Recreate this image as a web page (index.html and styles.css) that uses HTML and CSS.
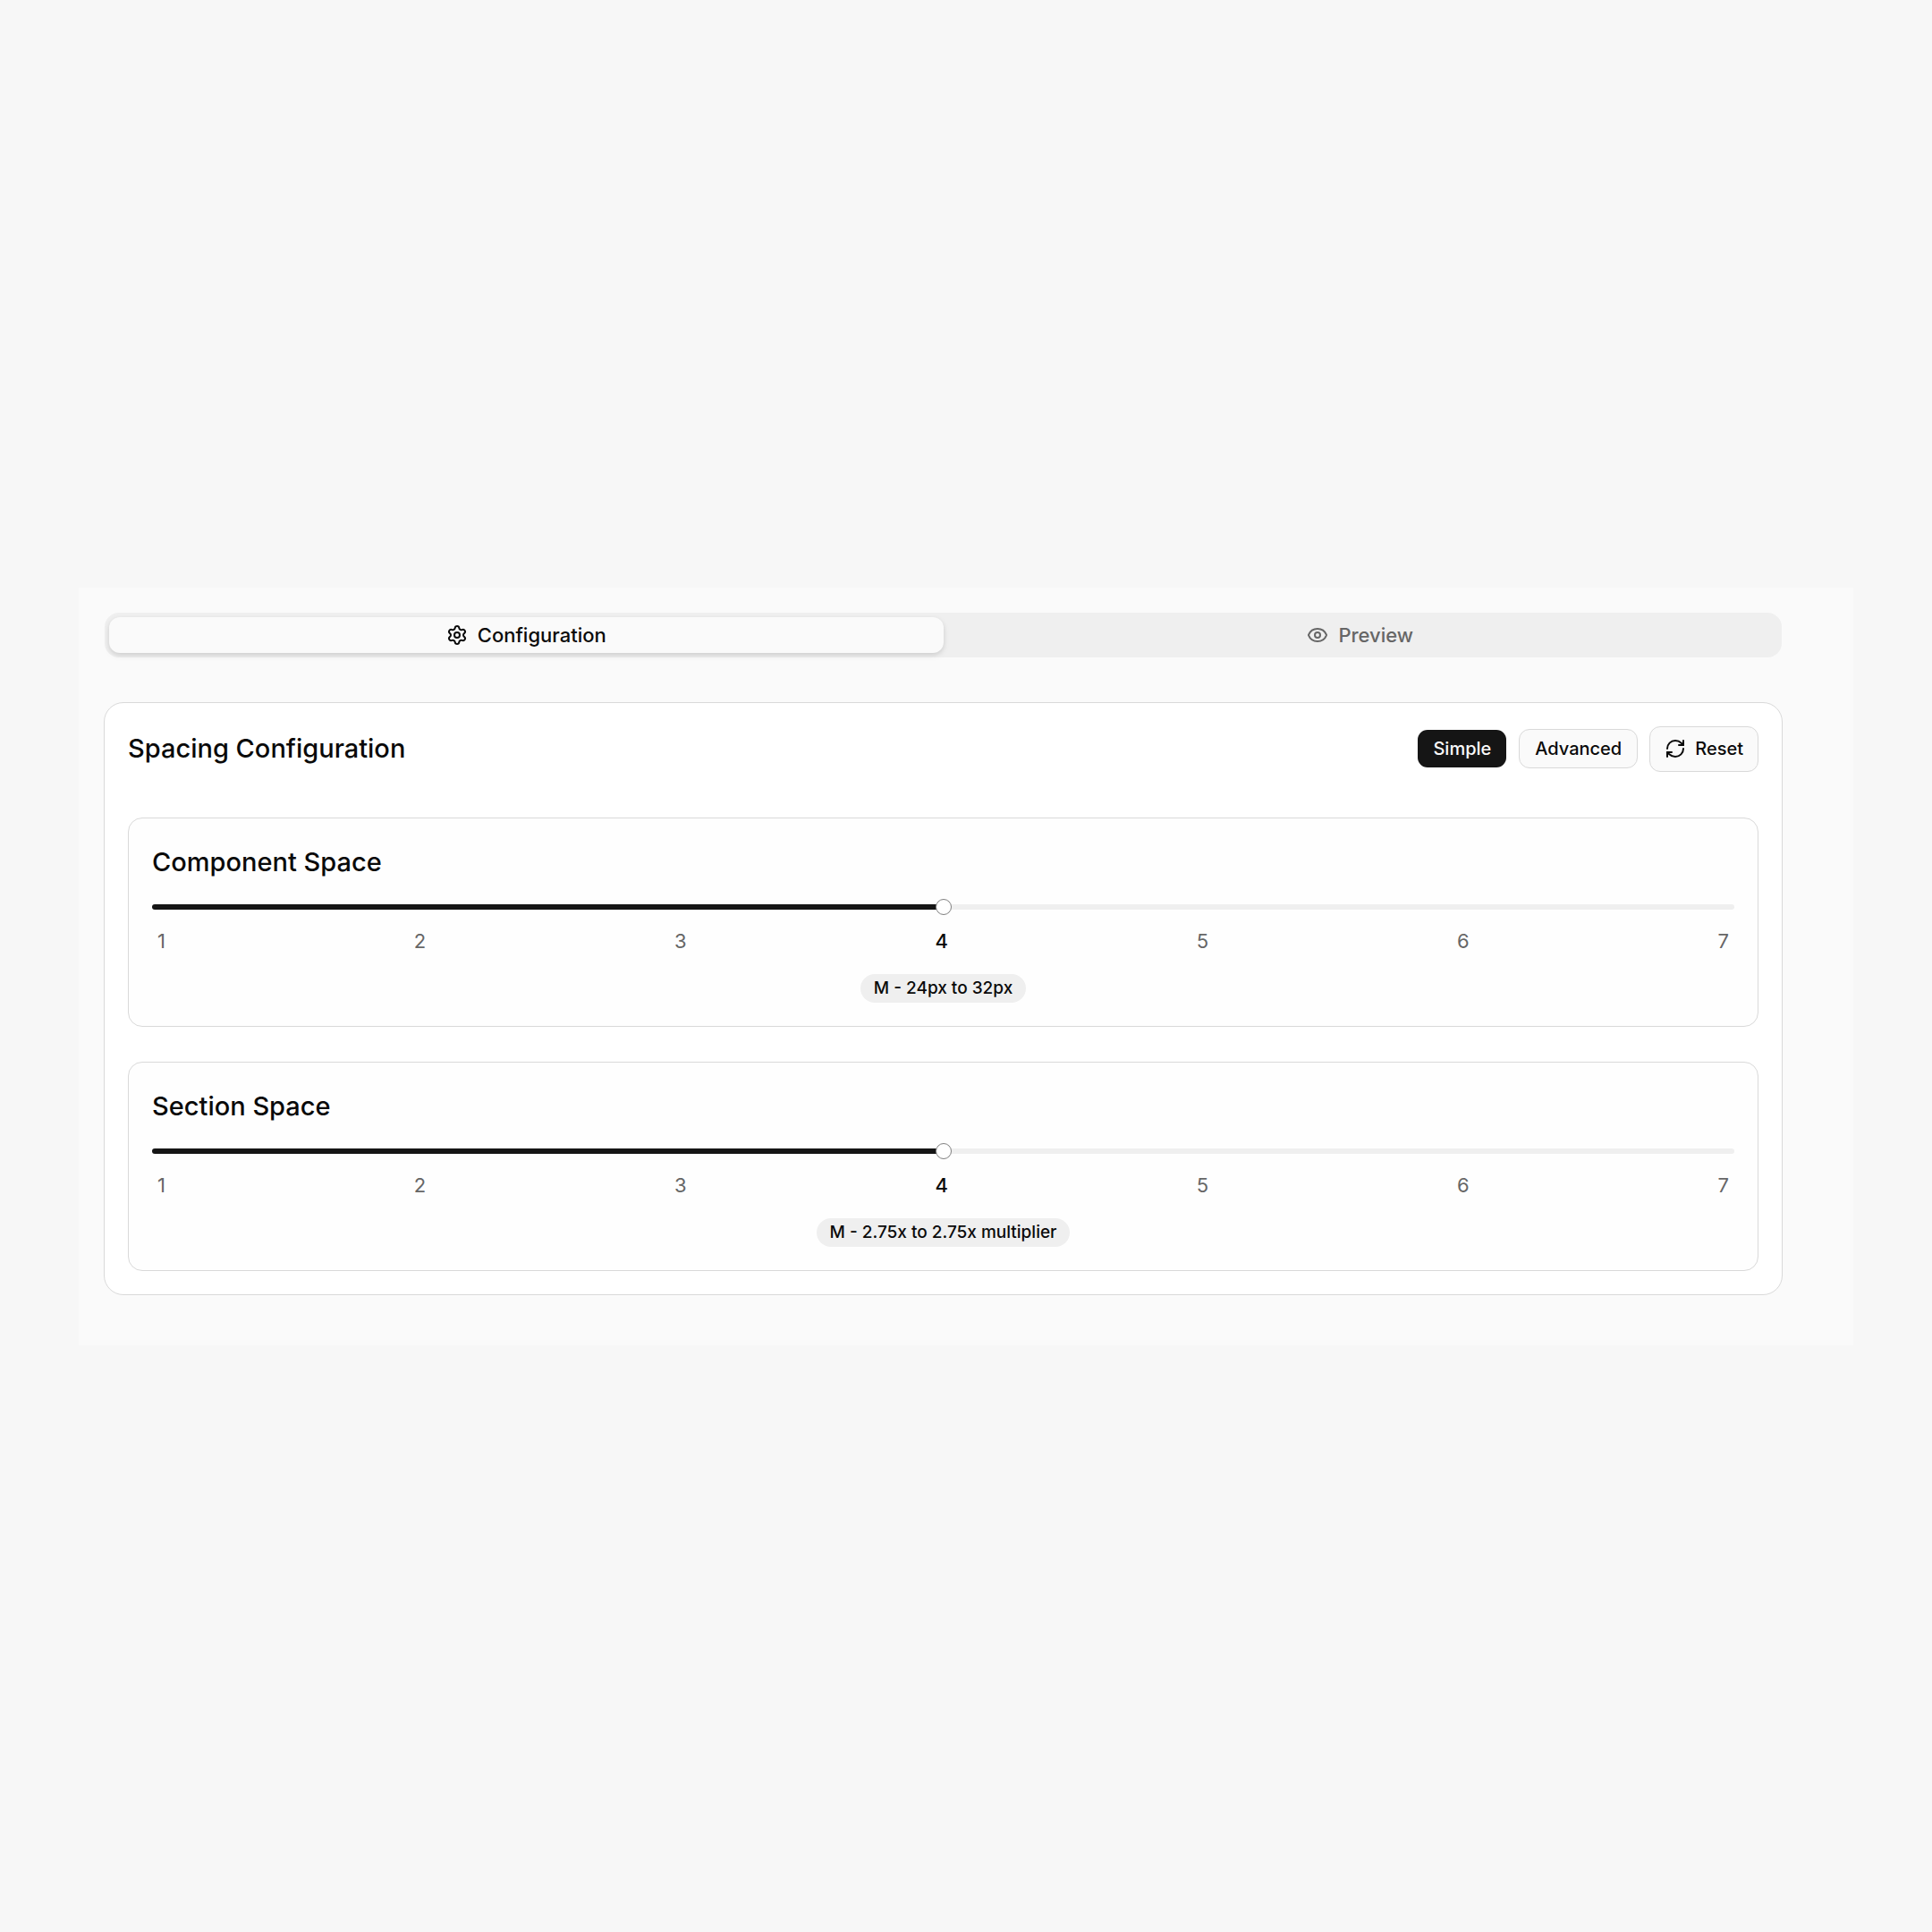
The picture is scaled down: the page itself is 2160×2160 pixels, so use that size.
FILE: index.html
```html
<!DOCTYPE html>
<html lang="en">
<head>
  <meta charset="UTF-8">
  <meta name="viewport" content="width=device-width, initial-scale=1.0">
  <title>Spacing Configuration</title>
  <link rel="stylesheet" href="styles.css">
</head>
<body>
  <main class="panel">
    <div class="tabs" role="tablist">
      <button class="tab active" role="tab" aria-selected="true">
        <svg class="icon" viewBox="0 0 24 24">
          <path d="M9.671 4.136a2.34 2.34 0 0 1 4.659 0 2.34 2.34 0 0 0 3.319 1.915 2.34 2.34 0 0 1 2.33 4.033 2.34 2.34 0 0 0 0 3.831 2.34 2.34 0 0 1-2.33 4.033 2.34 2.34 0 0 0-3.319 1.915 2.34 2.34 0 0 1-4.659 0 2.34 2.34 0 0 0-3.32-1.915 2.34 2.34 0 0 1-2.33-4.033 2.34 2.34 0 0 0 0-3.831A2.34 2.34 0 0 1 6.35 6.051a2.34 2.34 0 0 0 3.319-1.915"/>
          <circle cx="12" cy="12" r="3"/>
        </svg>
        Configuration
      </button>
      <button class="tab" role="tab" aria-selected="false">
        <svg class="icon" viewBox="0 0 24 24">
          <path d="M2.062 12.348a1 1 0 0 1 0-.696 10.75 10.75 0 0 1 19.876 0 1 1 0 0 1 0 .696 10.75 10.75 0 0 1-19.876 0"/>
          <circle cx="12" cy="12" r="3"/>
        </svg>
        Preview
      </button>
    </div>

    <section class="card">
      <div class="card-header">
        <h1>Spacing Configuration</h1>
        <div class="actions">
          <button class="btn btn-dark">Simple</button>
          <button class="btn">Advanced</button>
          <button class="btn btn-reset">
            <svg class="icon" viewBox="0 0 24 24">
              <path d="M3 12a9 9 0 0 1 9-9 9.75 9.75 0 0 1 6.74 2.74L21 8"/>
              <path d="M21 3v5h-5"/>
              <path d="M21 12a9 9 0 0 1-9 9 9.75 9.75 0 0 1-6.74-2.74L3 16"/>
              <path d="M8 16H3v5"/>
            </svg>
            Reset
          </button>
        </div>
      </div>

      <div class="settings">
        <div class="setting">
          <label for="component-space">Component Space</label>
          <input type="range" id="component-space" min="1" max="7" value="4">
          <div class="steps">
            <span>1</span>
            <span>2</span>
            <span>3</span>
            <span class="current">4</span>
            <span>5</span>
            <span>6</span>
            <span>7</span>
          </div>
          <div class="badge">M - 24px to 32px</div>
        </div>

        <div class="setting">
          <label for="section-space">Section Space</label>
          <input type="range" id="section-space" min="1" max="7" value="4">
          <div class="steps">
            <span>1</span>
            <span>2</span>
            <span>3</span>
            <span class="current">4</span>
            <span>5</span>
            <span>6</span>
            <span>7</span>
          </div>
          <div class="badge">M - 2.75x to 2.75x multiplier</div>
        </div>
      </div>
    </section>
  </main>
</body>
</html>
```

FILE: styles.css
```css
* {
  margin: 0;
  padding: 0;
  box-sizing: border-box;
}

:root {
  --page-bg: #f7f7f7;
  --panel-bg: #fafafa;
  --muted-bg: #efefef;
  --border: #d9d9d9;
  --text: #0a0a0a;
  --text-muted: #666666;
  --primary: #151515;
}

body {
  min-height: 100vh;
  padding: 0 88px;
  display: flex;
  align-items: center;
  background-color: var(--page-bg);
  color: var(--text);
  font-family: Inter, "Liberation Sans", sans-serif;
}

button {
  font: inherit;
  color: inherit;
  border: none;
  cursor: pointer;
}

.icon {
  width: 24px;
  height: 24px;
  fill: none;
  stroke: currentColor;
  stroke-width: 2;
  stroke-linecap: round;
  stroke-linejoin: round;
}

.panel {
  flex: 1;
  padding: 28px 79px 56px 28px;
  background-color: var(--panel-bg);
}

/* Tabs */
.tabs {
  display: flex;
  height: 50px;
  margin: 0 1px 50px;
  padding: 5px;
  border-radius: 16px;
  background-color: var(--muted-bg);
}

.tab {
  flex: 1;
  display: flex;
  align-items: center;
  justify-content: center;
  gap: 11px;
  border-radius: 12px;
  background-color: transparent;
  color: var(--text-muted);
  font-size: 22px;
  font-weight: 500;
}

.tab.active {
  background-color: var(--panel-bg);
  color: var(--text);
  box-shadow: 0 2px 5px rgba(0, 0, 0, 0.09), 0 3px 8px rgba(0, 0, 0, 0.06);
}

/* Card */
.card {
  padding: 26px;
  border: 1px solid var(--border);
  border-radius: 22px;
  background-color: #fff;
}

.card-header {
  display: flex;
  align-items: center;
  justify-content: space-between;
  margin-bottom: 51px;
}

h1,
.setting label {
  font-size: 29px;
  font-weight: 500;
  line-height: 46px;
}

.actions {
  display: flex;
  align-items: center;
  gap: 13px;
}

.btn {
  display: flex;
  align-items: center;
  gap: 10px;
  height: 44px;
  padding: 0 17px;
  border: 1px solid var(--border);
  border-radius: 12px;
  background-color: var(--panel-bg);
  font-size: 20px;
  font-weight: 500;
}

.btn-dark {
  border-color: transparent;
  background-color: var(--primary);
  background-clip: padding-box;
  color: #fafafa;
}

.btn-reset {
  height: 51px;
  padding: 0 16px;
}

/* Sliders */
.settings {
  display: flex;
  flex-direction: column;
  gap: 39px;
}

.setting {
  display: flex;
  flex-direction: column;
  padding: 26px;
  border: 1px solid var(--border);
  border-radius: 16px;
  background-color: #fefefe;
}

input[type="range"] {
  appearance: none;
  width: 100%;
  height: 20px;
  margin: 17px 0 13px;
  background: transparent;
  cursor: pointer;
}

input[type="range"]::-webkit-slider-runnable-track {
  height: 6px;
  border-radius: 3px;
  background: linear-gradient(to right, var(--primary) 50%, var(--muted-bg) 50%);
}

input[type="range"]::-webkit-slider-thumb {
  appearance: none;
  width: 18px;
  height: 18px;
  margin-top: -6px;
  border: 1px solid #808080;
  border-radius: 50%;
  background-color: #fff;
}

.steps {
  display: flex;
  justify-content: space-between;
  padding: 0 6px;
  color: var(--text-muted);
  font-size: 22px;
  line-height: 30px;
}

.steps .current {
  color: var(--text);
  font-weight: 500;
}

.badge {
  align-self: center;
  margin-top: 22px;
  padding: 0 15px;
  border-radius: 16px;
  background-color: var(--muted-bg);
  font-size: 19px;
  font-weight: 500;
  line-height: 32px;
}
```
